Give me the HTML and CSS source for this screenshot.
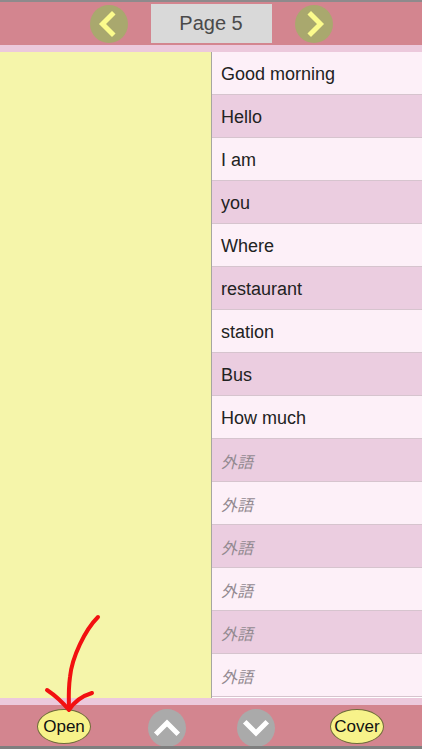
FILE: index.html
```html
<!DOCTYPE html>
<html>
<head>
<meta charset="utf-8">
<link rel="stylesheet" href="styles.css">
</head>
<body>
<div class="app">
  <div class="topline"></div>
  <header class="header">
    <div class="navbtn">
      <svg width="38" height="38" viewBox="0 0 38 38"><circle cx="19" cy="19" r="19" fill="#a9a86e"/><path d="M22 9.5 L12.5 19 L22 28.5" fill="none" stroke="#fbfb8c" stroke-width="5" stroke-linecap="square"/></svg>
    </div>
    <div class="pagebox">Page 5</div>
    <div class="navbtn">
      <svg width="38" height="38" viewBox="0 0 38 38"><circle cx="19" cy="19" r="19" fill="#a9a86e"/><path d="M16 9.5 L25.5 19 L16 28.5" fill="none" stroke="#fbfb8c" stroke-width="5" stroke-linecap="square"/></svg>
    </div>
  </header>
  <div class="strip"></div>
  <main class="content">
    <div class="leftpane"></div>
    <div class="list">
      <div class="row odd">Good morning</div>
      <div class="row even">Hello</div>
      <div class="row odd">I am</div>
      <div class="row even">you</div>
      <div class="row odd">Where</div>
      <div class="row even">restaurant</div>
      <div class="row odd">station</div>
      <div class="row even">Bus</div>
      <div class="row odd">How much</div>
      <div class="row even foreign">外語</div>
      <div class="row odd foreign">外語</div>
      <div class="row even foreign">外語</div>
      <div class="row odd foreign">外語</div>
      <div class="row even foreign">外語</div>
      <div class="row odd foreign">外語</div>
    </div>
  </main>
  <div class="strip"></div>
  <footer class="footer">
    <div class="pill">Open</div>
    <div class="roundbtn up">
      <svg width="38" height="38" viewBox="0 0 38 38"><circle cx="19" cy="19" r="19" fill="#aaaaaa"/><path d="M9.5 23.5 L19 14 L28.5 23.5" fill="none" stroke="#ffffff" stroke-width="5" stroke-linecap="square"/></svg>
    </div>
    <div class="roundbtn down">
      <svg width="38" height="38" viewBox="0 0 38 38"><circle cx="19" cy="19" r="19" fill="#aaaaaa"/><path d="M9.5 14.5 L19 24 L28.5 14.5" fill="none" stroke="#ffffff" stroke-width="5" stroke-linecap="square"/></svg>
    </div>
    <div class="pill cover">Cover</div>
  </footer>
  <div class="bottomline"></div>
  <svg class="annot" width="120" height="110" viewBox="0 0 120 110">
    <path d="M98 5 C 85 18, 72 45, 70 65 C 68 80, 69 90, 69 97" fill="none" stroke="#f21010" stroke-width="4" stroke-linecap="round"/>
    <path d="M47 78 C 56 84, 64 92, 69 98 C 74 90, 82 84, 92 81" fill="none" stroke="#f21010" stroke-width="4" stroke-linecap="round" stroke-linejoin="round"/>
  </svg>
</div>
</body>
</html>
```
FILE: styles.css
```css
html, body {
  margin: 0;
  padding: 0;
}
body {
  width: 422px;
  height: 750px;
  overflow: hidden;
  font-family: "Liberation Sans", Arial, sans-serif;
}
.app {
  position: relative;
  width: 422px;
  height: 750px;
  display: flex;
  flex-direction: column;
}
.topline {
  height: 2px;
  background: #8e8a8c;
}
.header {
  height: 43px;
  background: #d3858f;
  display: flex;
  align-items: center;
  justify-content: center;
}
.navbtn {
  width: 38px;
  height: 38px;
  display: flex;
}
.pagebox {
  width: 121px;
  height: 39px;
  margin: 0 23px;
  background: #d9d9d9;
  color: #4a4a4a;
  font-size: 20px;
  display: flex;
  align-items: center;
  justify-content: center;
}
.strip {
  height: 7px;
  background: #ecc9dc;
}
.content {
  height: 646px;
  display: flex;
}
.leftpane {
  width: 211px;
  background: #f5f5aa;
  border-right: 1px solid #a6a6a0;
}
.list {
  flex: 1;
  display: flex;
  flex-direction: column;
}
.row {
  height: 42px;
  box-sizing: border-box;
  height: 43px;
  padding-top: 2px;
  border-bottom: 1px solid #d6c4ce;
  display: flex;
  align-items: center;
  padding-left: 9px;
  font-size: 18px;
  color: #222222;
}
.row.odd {
  background: #fdf0f8;
}
.row.even {
  background: #ebcde0;
}
.row.foreign {
  font-family: "Noto Sans CJK JP", "Liberation Sans", sans-serif;
  font-style: italic;
  font-size: 16px;
  color: #938a91;
}
.footer {
  height: 41px;
  background: #d3858f;
  display: flex;
  align-items: center;
  padding-left: 37px;
}
.pill {
  width: 52px;
  height: 33px;
  border: 1px solid #6e6a3a;
  border-radius: 50%;
  background: #f7f28a;
  color: #111111;
  font-size: 17px;
  display: flex;
  align-items: center;
  justify-content: center;
  margin-top: 2px;
}
.roundbtn {
  width: 38px;
  height: 38px;
  display: flex;
  margin-top: 4px;
}
.roundbtn.up {
  margin-left: 57px;
}
.roundbtn.down {
  margin-left: 51px;
}
.pill.cover {
  margin-left: 55px;
}
.bottomline {
  height: 3px;
  background: #7f7f7f;
}
.annot {
  position: absolute;
  left: 0;
  top: 612px;
}
```
